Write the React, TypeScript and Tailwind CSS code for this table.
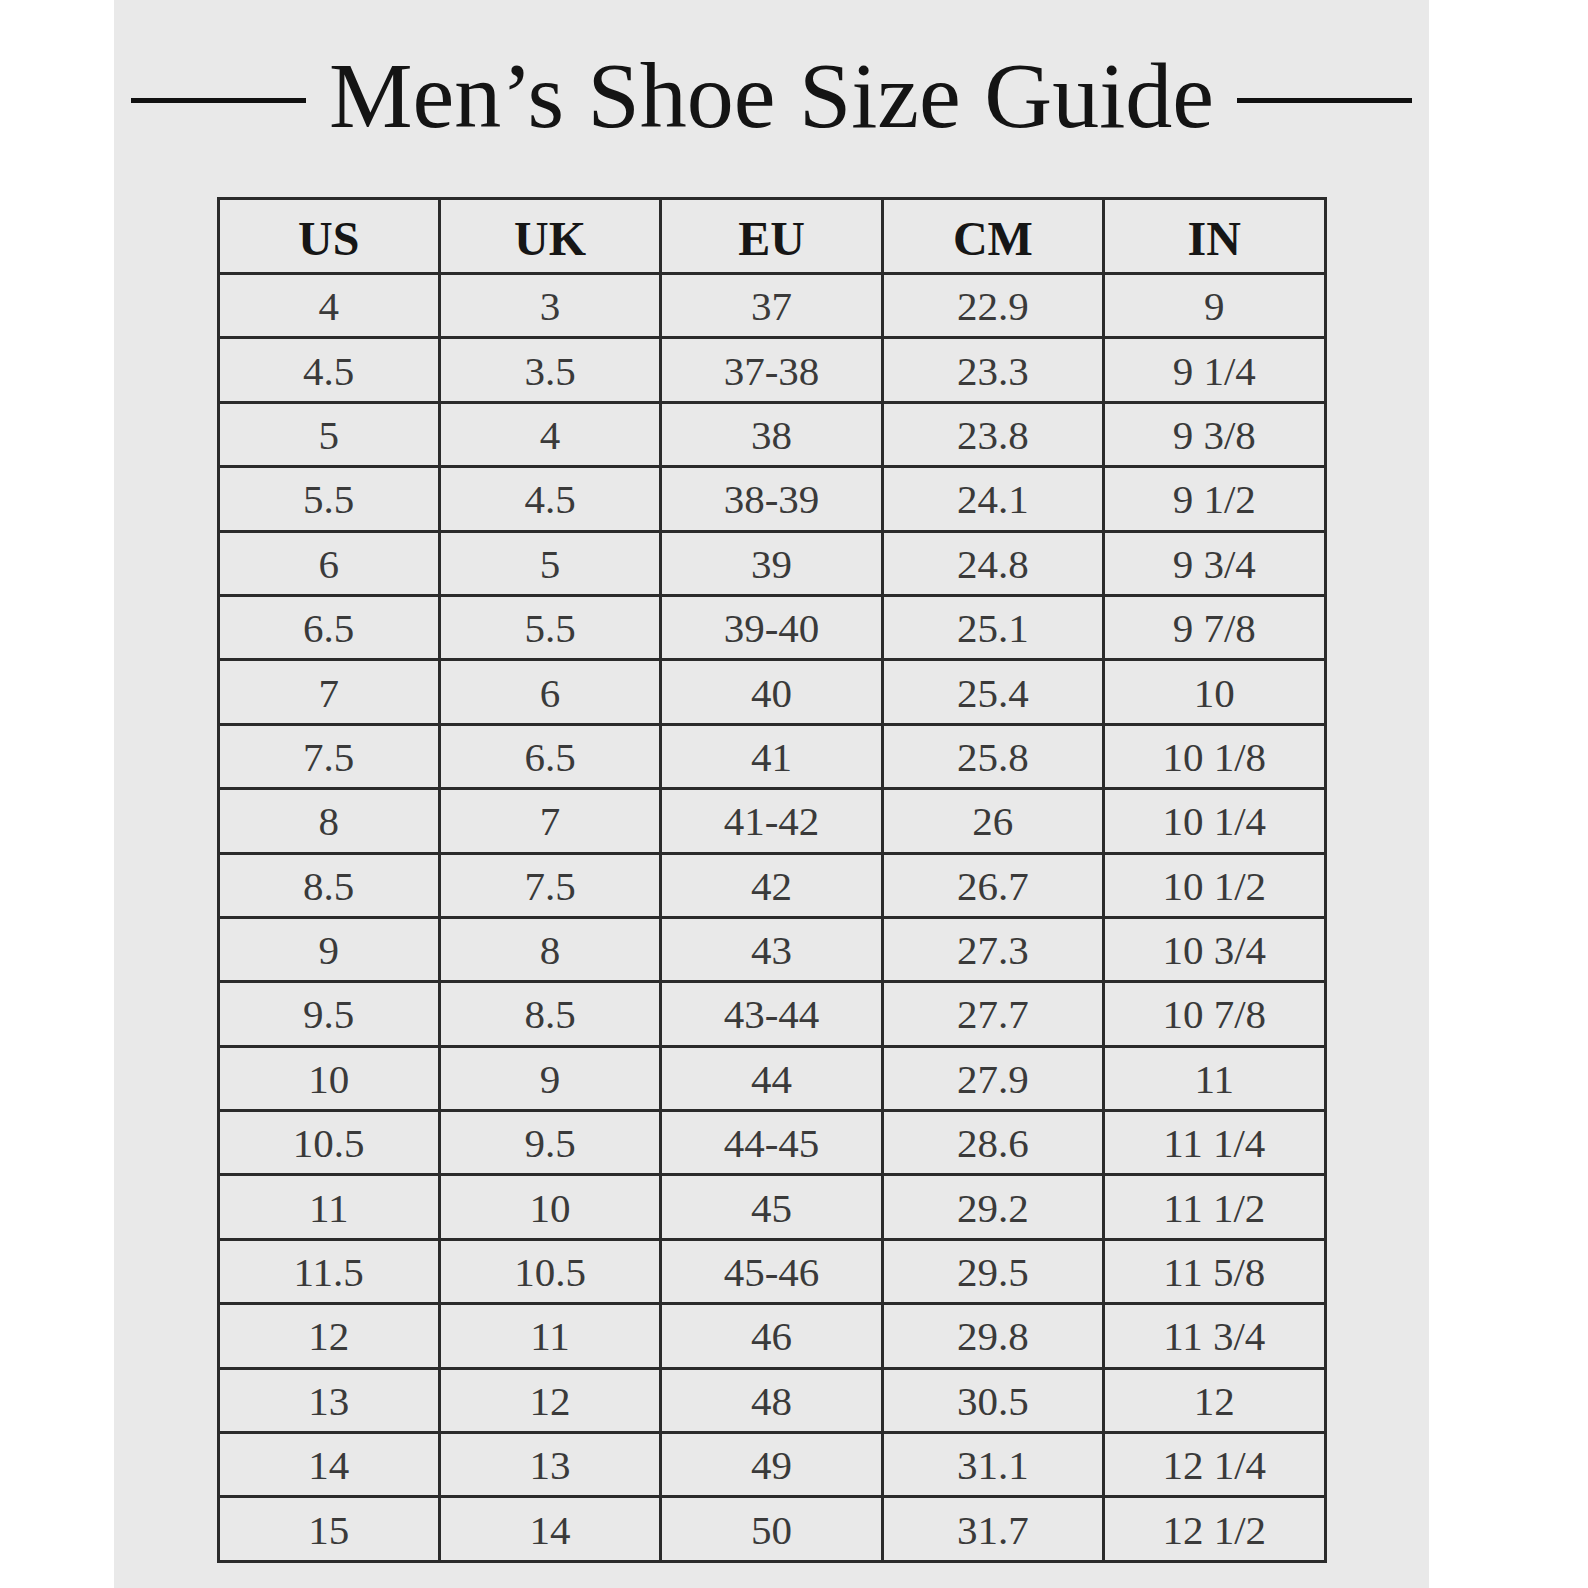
import React from 'react';

const headers = ['US', 'UK', 'EU', 'CM', 'IN'];

const rows = [
  ['4', '3', '37', '22.9', '9'],
  ['4.5', '3.5', '37-38', '23.3', '9 1/4'],
  ['5', '4', '38', '23.8', '9 3/8'],
  ['5.5', '4.5', '38-39', '24.1', '9 1/2'],
  ['6', '5', '39', '24.8', '9 3/4'],
  ['6.5', '5.5', '39-40', '25.1', '9 7/8'],
  ['7', '6', '40', '25.4', '10'],
  ['7.5', '6.5', '41', '25.8', '10 1/8'],
  ['8', '7', '41-42', '26', '10 1/4'],
  ['8.5', '7.5', '42', '26.7', '10 1/2'],
  ['9', '8', '43', '27.3', '10 3/4'],
  ['9.5', '8.5', '43-44', '27.7', '10 7/8'],
  ['10', '9', '44', '27.9', '11'],
  ['10.5', '9.5', '44-45', '28.6', '11 1/4'],
  ['11', '10', '45', '29.2', '11 1/2'],
  ['11.5', '10.5', '45-46', '29.5', '11 5/8'],
  ['12', '11', '46', '29.8', '11 3/4'],
  ['13', '12', '48', '30.5', '12'],
  ['14', '13', '49', '31.1', '12 1/4'],
  ['15', '14', '50', '31.7', '12 1/2'],
];

const App = () => {
  return (
    <div className="min-h-screen bg-white">
      <div
        className="ml-[114px] w-[1315px] h-[1588px] bg-[#e9e9e9] pt-[48px]"
        style={{ fontFamily: '"Liberation Serif", "Times New Roman", serif' }}
      >
        {/* Title */}
        <div className="flex items-center justify-center gap-[23px]">
          <div className="w-[175px] h-[5px] bg-[#111] mt-[10px]"></div>
          <h1 className="text-[94px] leading-none font-normal text-[#141414]">
            Men’s Shoe Size Guide
          </h1>
          <div className="w-[175px] h-[5px] bg-[#111] mt-[10px]"></div>
        </div>

        {/* Size table */}
        <table className="mt-[55px] mx-auto w-[1110px] table-fixed border-collapse border-[3px] border-[#2b2b2b]">
          <thead>
            <tr className="h-[75px]">
              {headers.map((h) => (
                <th
                  key={h}
                  className="border-[3px] border-[#2b2b2b] text-[48px] font-bold text-[#161616] text-center align-middle pt-[6px] leading-none"
                >
                  {h}
                </th>
              ))}
            </tr>
          </thead>
          <tbody>
            {rows.map((row, i) => (
              <tr key={i} className="h-[64.4px]">
                {row.map((cell, j) => (
                  <td
                    key={j}
                    className="border-[3px] border-[#2b2b2b] text-[41px] text-[#3a3a3a] text-center align-middle leading-none pt-[2px]"
                  >
                    {cell}
                  </td>
                ))}
              </tr>
            ))}
          </tbody>
        </table>
      </div>
    </div>
  );
};

export default App;
